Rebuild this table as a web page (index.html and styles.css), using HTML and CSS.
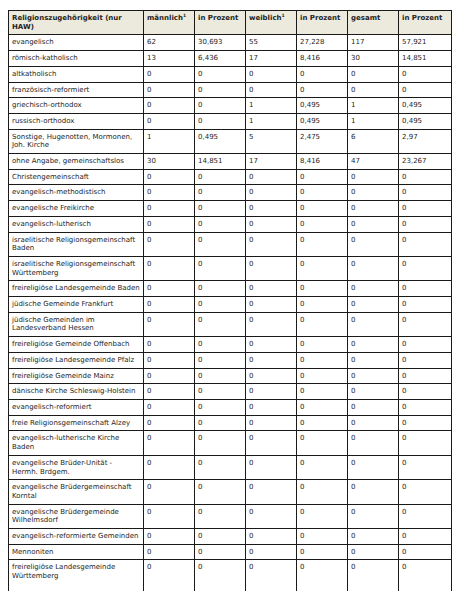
FILE: index.html
```html
<!DOCTYPE html>
<html lang="de">
<head>
<meta charset="utf-8">
<title>Religionszugehörigkeit</title>
<link rel="stylesheet" href="styles.css">
</head>
<body>
<div class="page">
<table class="stats">
<colgroup>
<col class="c-name"><col class="c-num"><col class="c-num"><col class="c-num"><col class="c-num"><col class="c-num"><col class="c-last">
</colgroup>
<thead>
<tr><th>Religionszugehörigkeit (nur HAW)</th><th>männlich<sup>1</sup></th><th>in Prozent</th><th>weiblich<sup>1</sup></th><th>in Prozent</th><th>gesamt</th><th>in Prozent</th></tr>
</thead>
<tbody>
<tr><td>evangelisch</td><td>62</td><td>30,693</td><td>55</td><td>27,228</td><td>117</td><td>57,921</td></tr>
<tr><td>römisch-katholisch</td><td>13</td><td>6,436</td><td>17</td><td>8,416</td><td>30</td><td>14,851</td></tr>
<tr><td>altkatholisch</td><td>0</td><td>0</td><td>0</td><td>0</td><td>0</td><td>0</td></tr>
<tr><td>französisch-reformiert</td><td>0</td><td>0</td><td>0</td><td>0</td><td>0</td><td>0</td></tr>
<tr><td>griechisch-orthodox</td><td>0</td><td>0</td><td>1</td><td>0,495</td><td>1</td><td>0,495</td></tr>
<tr><td>russisch-orthodox</td><td>0</td><td>0</td><td>1</td><td>0,495</td><td>1</td><td>0,495</td></tr>
<tr><td>Sonstige, Hugenotten, Mormonen, Joh. Kirche</td><td>1</td><td>0,495</td><td>5</td><td>2,475</td><td>6</td><td>2,97</td></tr>
<tr><td>ohne Angabe, gemeinschaftslos</td><td>30</td><td>14,851</td><td>17</td><td>8,416</td><td>47</td><td>23,267</td></tr>
<tr><td>Christengemeinschaft</td><td>0</td><td>0</td><td>0</td><td>0</td><td>0</td><td>0</td></tr>
<tr><td>evangelisch-methodistisch</td><td>0</td><td>0</td><td>0</td><td>0</td><td>0</td><td>0</td></tr>
<tr><td>evangelische Freikirche</td><td>0</td><td>0</td><td>0</td><td>0</td><td>0</td><td>0</td></tr>
<tr><td>evangelisch-lutherisch</td><td>0</td><td>0</td><td>0</td><td>0</td><td>0</td><td>0</td></tr>
<tr><td>israelitische Religionsgemeinschaft Baden</td><td>0</td><td>0</td><td>0</td><td>0</td><td>0</td><td>0</td></tr>
<tr><td>israelitische Religionsgemeinschaft Württemberg</td><td>0</td><td>0</td><td>0</td><td>0</td><td>0</td><td>0</td></tr>
<tr><td>freireligiöse Landesgemeinde Baden</td><td>0</td><td>0</td><td>0</td><td>0</td><td>0</td><td>0</td></tr>
<tr><td>jüdische Gemeinde Frankfurt</td><td>0</td><td>0</td><td>0</td><td>0</td><td>0</td><td>0</td></tr>
<tr><td>jüdische Gemeinden im Landesverband Hessen</td><td>0</td><td>0</td><td>0</td><td>0</td><td>0</td><td>0</td></tr>
<tr><td>freireligiöse Gemeinde Offenbach</td><td>0</td><td>0</td><td>0</td><td>0</td><td>0</td><td>0</td></tr>
<tr><td>freireligiöse Landesgemeinde Pfalz</td><td>0</td><td>0</td><td>0</td><td>0</td><td>0</td><td>0</td></tr>
<tr><td>freireligiöse Gemeinde Mainz</td><td>0</td><td>0</td><td>0</td><td>0</td><td>0</td><td>0</td></tr>
<tr><td>dänische Kirche Schleswig-Holstein</td><td>0</td><td>0</td><td>0</td><td>0</td><td>0</td><td>0</td></tr>
<tr><td>evangelisch-reformiert</td><td>0</td><td>0</td><td>0</td><td>0</td><td>0</td><td>0</td></tr>
<tr><td>freie Religionsgemeinschaft Alzey</td><td>0</td><td>0</td><td>0</td><td>0</td><td>0</td><td>0</td></tr>
<tr><td>evangelisch-lutherische Kirche Baden</td><td>0</td><td>0</td><td>0</td><td>0</td><td>0</td><td>0</td></tr>
<tr><td>evangelische Brüder-Unität - Hermh. Brdgem.</td><td>0</td><td>0</td><td>0</td><td>0</td><td>0</td><td>0</td></tr>
<tr><td>evangelische Brüdergemeinschaft Korntal</td><td>0</td><td>0</td><td>0</td><td>0</td><td>0</td><td>0</td></tr>
<tr><td>evangelische Brüdergemeinde Wilhelmsdorf</td><td>0</td><td>0</td><td>0</td><td>0</td><td>0</td><td>0</td></tr>
<tr><td>evangelisch-reformierte Gemeinden</td><td>0</td><td>0</td><td>0</td><td>0</td><td>0</td><td>0</td></tr>
<tr><td>Mennoniten</td><td>0</td><td>0</td><td>0</td><td>0</td><td>0</td><td>0</td></tr>
<tr class="tall"><td>freireligiöse Landesgemeinde Württemberg</td><td>0</td><td>0</td><td>0</td><td>0</td><td>0</td><td>0</td></tr>
</tbody>
</table>
</div>
</body>
</html>
```
FILE: styles.css
```css
html, body {
  margin: 0;
  padding: 0;
  background: #ffffff;
}

.page {
  padding: 10px 0 0 8px;
}

.stats {
  border-collapse: collapse;
  table-layout: fixed;
  width: 444px;
  font-family: "DejaVu Sans", Verdana, sans-serif;
  font-size: 7px;
  line-height: 8.7px;
  color: #1e1e1e;
}

.c-name { width: 135px; }
.c-num { width: 51px; }
.c-last { width: 53px; }

.stats th,
.stats td {
  border: 1.5px solid #1a1a1a;
  padding: 3px 3px 3px 3px;
  text-align: left;
  vertical-align: top;
}

.stats th {
  background: #ece9dd;
  font-weight: bold;
}

.stats sup {
  font-size: 4.5px;
  line-height: 0;
  vertical-align: 3px;
}

.stats .tall td {
  height: 27px;
}
```
